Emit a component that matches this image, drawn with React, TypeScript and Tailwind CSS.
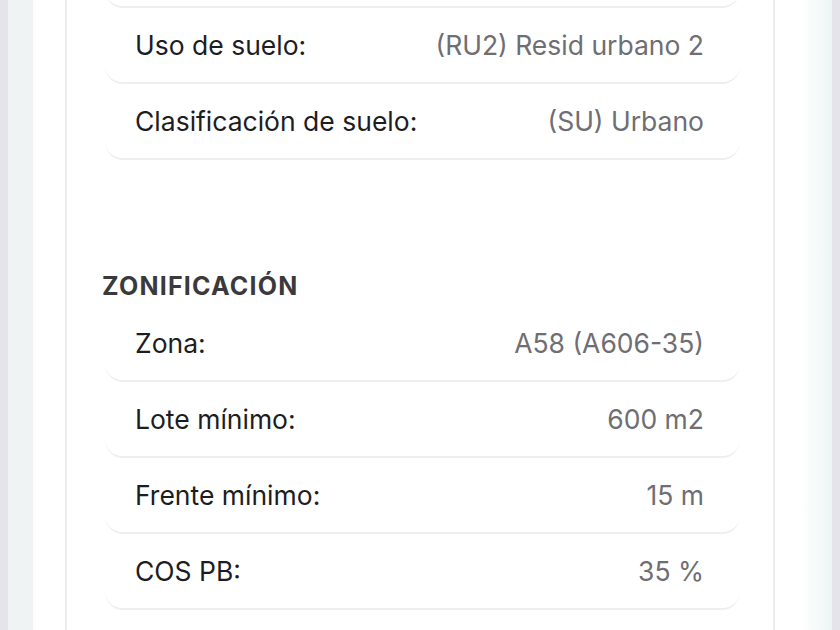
import React from 'react';

interface RowProps {
  label: string;
  value: string;
}

const Row: React.FC<RowProps> = ({ label, value }) => {
  return (
    <div className="flex h-[76px] items-center justify-between rounded-[18px] border-b-2 border-[#efefef] pl-[30px] pr-[36px] pt-[2px]">
      <span className="text-[26.5px] text-[#1d1d1f]">{label}</span>
      <span className="text-[26.5px] text-[#6e6e73]">{value}</span>
    </div>
  );
};

const suelo = [
  { label: '', value: '' },
  { label: 'Uso de suelo:', value: '(RU2) Resid urbano 2' },
  { label: 'Clasificación de suelo:', value: '(SU) Urbano' },
];

const zonificacion = [
  { label: 'Zona:', value: 'A58 (A606-35)' },
  { label: 'Lote mínimo:', value: '600 m2' },
  { label: 'Frente mínimo:', value: '15 m' },
  { label: 'COS PB:', value: '35 %' },
];

export default function App() {
  return (
    <div
      className="flex h-[630px] w-[840px] overflow-hidden bg-white"
      style={{ fontFamily: 'Inter, "Liberation Sans", sans-serif' }}
    >
      <div className="w-[8px] shrink-0 bg-[#e5e4ea]" />
      <div className="w-[25px] shrink-0 bg-[#eff3f3]" />
      <div className="w-[32px] shrink-0 bg-white" />

      <section className="flex-1 border-x-2 border-[#ececec] bg-white pl-[38px] pr-[33px]">
        <div className="-mt-[68px]">
          {suelo.map((r, i) => (
            <Row key={i} label={r.label} value={r.value} />
          ))}

          <h2 className="-ml-[3px] mb-[4px] mt-[110px] h-[32px] text-[25px] leading-[32px] font-bold tracking-[1.2px] text-[#3a3a3c]">
            ZONIFICACIÓN
          </h2>

          {zonificacion.map((r) => (
            <Row key={r.label} label={r.label} value={r.value} />
          ))}
        </div>
      </section>

      <div className="w-[25px] shrink-0 bg-white" />
      <div className="w-[32px] shrink-0 bg-gradient-to-r from-white to-[#eef5f5]" />
      <div className="w-[8px] shrink-0 bg-[#e5e4ea]" />
    </div>
  );
}
